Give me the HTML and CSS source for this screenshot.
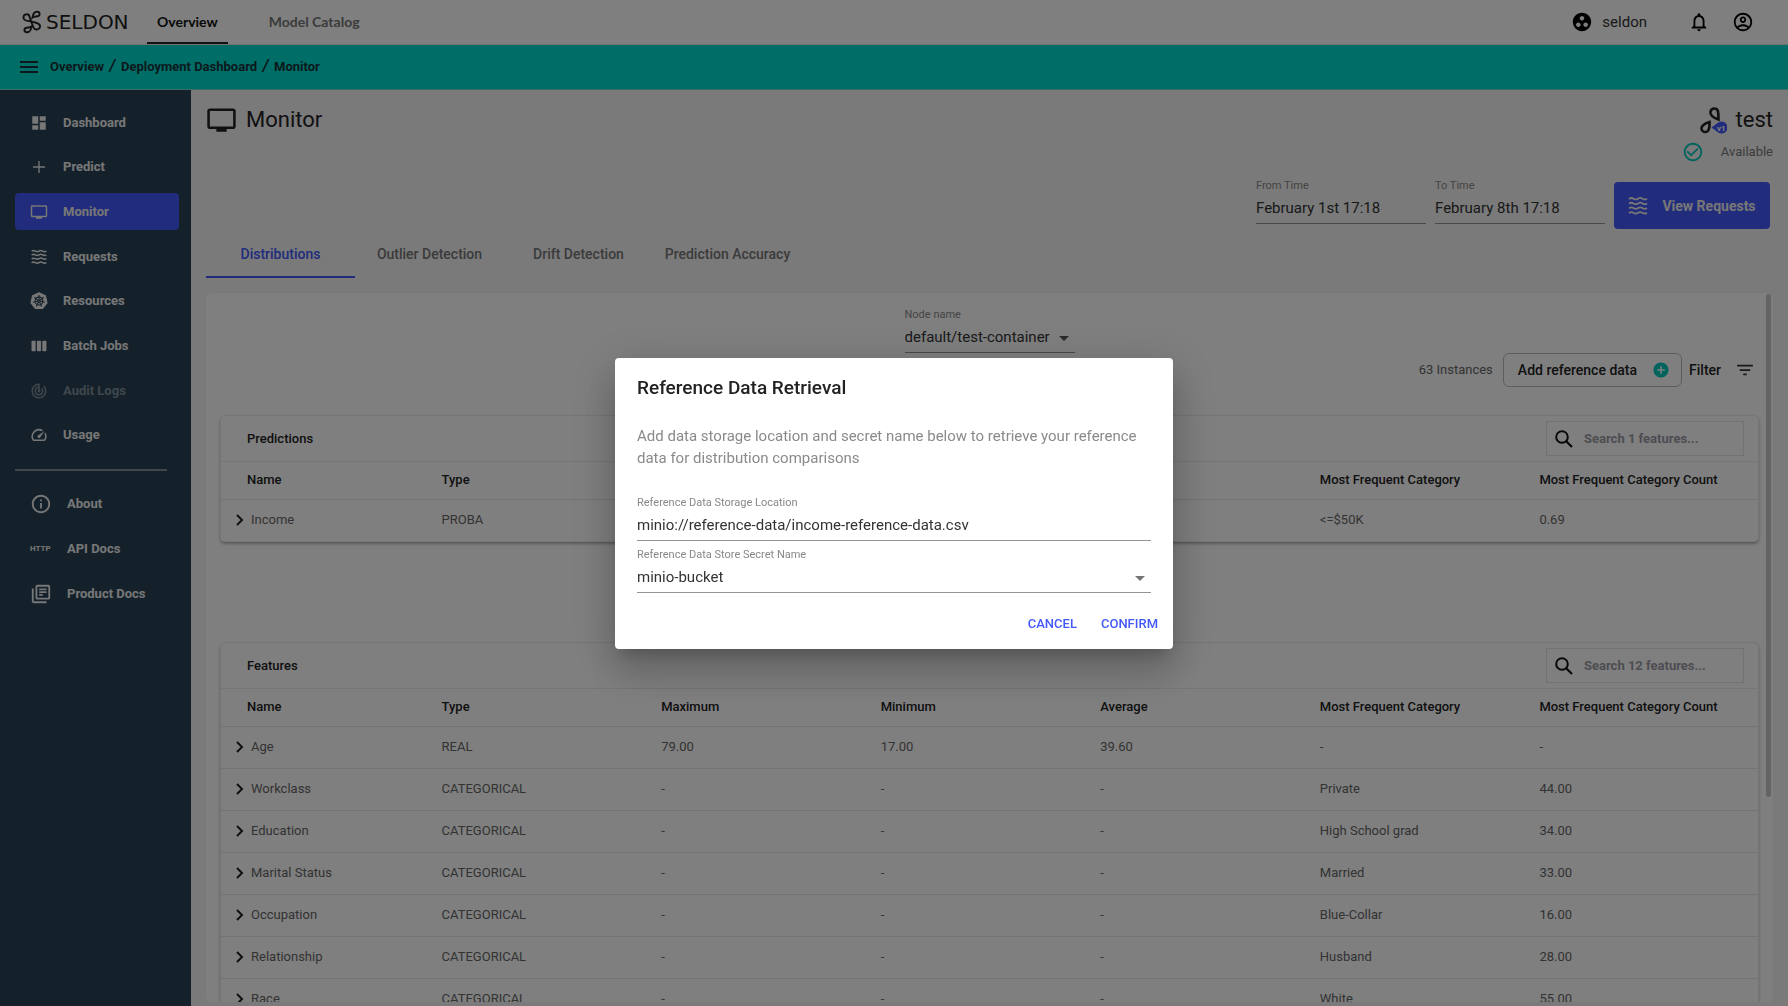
FILE: index.html
```html
<!DOCTYPE html>
<html lang="en">
<head>
<meta charset="utf-8">
<meta name="viewport" content="width=device-width, initial-scale=1">
<title>Seldon Deploy - Monitor</title>
<link rel="stylesheet" href="styles.css">
</head>
<body>
<svg class="sprite" aria-hidden="true">
  <symbol id="chevron" viewBox="0 0 8 12"><path d="M1 1l5 5-5 5" fill="none" stroke="currentColor" stroke-width="2"/></symbol>
  <symbol id="waves" viewBox="0 0 20 18"><path d="M1 2q2.200-1.800 4.500-.3t4.500 0t4.500 0t4.500 0M1 6.700q2.200-1.800 4.500-.3t4.500 0t4.500 0t4.500 0M1 11.400q2.200-1.800 4.500-.3t4.500 0t4.500 0t4.500 0M1 16.100q2.200-1.800 4.500-.3t4.500 0t4.500 0t4.500 0" fill="none" stroke="currentColor" stroke-width="1.800"/></symbol>
  <symbol id="tv" viewBox="0 0 24 24"><path d="M21 3H3c-1.110 0-2 .89-2 2v12c0 1.100.89 2 2 2h5v2h8v-2h5c1.100 0 1.990-.9 1.990-2L23 5c0-1.110-.9-2-2-2zm0 14H3V5h18v12z"/></symbol>
  <symbol id="search" viewBox="0 0 18 18"><circle cx="7" cy="7" r="5.800" fill="none" stroke="currentColor" stroke-width="2"/><path d="M11 11l6 6" stroke="currentColor" stroke-width="2.200"/></symbol>
  <symbol id="arrow" viewBox="0 0 10 5"><path d="M0 0h10L5 5z"/></symbol>
</svg>

<header class="topbar">
  <a class="brand" href="#">
    <svg class="brand-mark" viewBox="0 0 20 24" fill="none" stroke="currentColor" stroke-width="1.900"><path d="M10 11.500C8 10.600 2 12 1.500 8 1 4 6.500 3 7.500 6.500 8.500 10 10 14 11.500 17.500c1.500 3.500 7 2 6.500-1.500-.5-3.500-5-3-8-4.500M10.500 7.500C11 3.500 13 1.500 15.500 1.800c2.800.3 2.800 4 0 4.500-2 .4-3.500 0-5 1.200zM9.500 16.500C9 20.500 7 22.500 4.500 22.200c-2.800-.3-2.800-4 0-4.500 2-.4 3.500 0 5-1.200z"/></svg>
    <span>SELDON</span>
  </a>
  <nav class="topnav">
    <a class="current" href="#">Overview</a>
    <a href="#">Model Catalog</a>
  </nav>
  <div class="account">
    <svg class="i22" viewBox="0 0 24 24"><path d="M12 2C6.480 2 2 6.480 2 12s4.480 10 10 10 10-4.480 10-10S17.520 2 12 2zM8 17.500c-1.380 0-2.500-1.120-2.500-2.500s1.120-2.500 2.500-2.500 2.500 1.120 2.500 2.500-1.120 2.500-2.500 2.500zM9.500 8c0-1.380 1.120-2.500 2.500-2.500s2.500 1.120 2.500 2.500-1.120 2.500-2.500 2.500S9.500 9.380 9.500 8zm6.500 9.500c-1.380 0-2.500-1.120-2.500-2.500s1.120-2.500 2.500-2.500 2.500 1.120 2.500 2.500-1.120 2.500-2.500 2.500z"/></svg>
    <span class="account-name">seldon</span>
    <button class="icon-btn" aria-label="Notifications"><svg class="i22" viewBox="0 0 24 24"><path d="M12 22c1.100 0 2-.9 2-2h-4c0 1.100.9 2 2 2zm6-6v-5c0-3.070-1.630-5.640-4.500-6.320V4c0-.83-.67-1.500-1.500-1.500s-1.500.67-1.500 1.500v.68C7.640 5.360 6 7.920 6 11v5l-2 2v1h16v-1l-2-2zm-2 1H8v-6c0-2.480 1.510-4.500 4-4.500s4 2.020 4 4.500v6z"/></svg></button>
    <button class="icon-btn" aria-label="Account"><svg class="i22" viewBox="0 0 24 24"><path d="M12 2C6.480 2 2 6.480 2 12s4.480 10 10 10 10-4.480 10-10S17.520 2 12 2zM7.070 18.280c.43-.9 3.050-1.780 4.930-1.780s4.510.88 4.930 1.780C15.570 19.360 13.860 20 12 20s-3.570-.64-4.930-1.720zm11.290-1.450c-1.430-1.740-4.900-2.330-6.360-2.330s-4.930.59-6.360 2.330C4.620 15.490 4 13.820 4 12c0-4.410 3.590-8 8-8s8 3.590 8 8c0 1.820-.62 3.490-1.640 4.830zM12 6c-1.940 0-3.500 1.560-3.500 3.500S10.060 13 12 13s3.500-1.560 3.500-3.500S13.940 6 12 6zm0 5c-.83 0-1.500-.67-1.500-1.500S11.170 8 12 8s1.500.67 1.500 1.500S12.830 11 12 11z"/></svg></button>
  </div>
</header>

<div class="crumbbar">
  <button class="icon-btn" aria-label="Menu"><svg class="menu-icon" viewBox="0 0 18 12"><path d="M0 0h18v2H0zM0 5h18v2H0zM0 10h18v2H0z"/></svg></button>
  <nav class="crumbs">
    <a href="#">Overview</a><span class="slash">/</span><a href="#">Deployment Dashboard</a><span class="slash">/</span><a href="#">Monitor</a>
  </nav>
</div>

<div class="shell">
  <aside class="sidebar">
    <nav class="side-main">
      <a href="#"><svg viewBox="0 0 24 24"><path d="M3 13h8V3H3v10zm0 8h8v-6H3v6zm10 0h8V11h-8v10zm0-18v6h8V3h-8z"/></svg>Dashboard</a>
      <a href="#"><svg viewBox="0 0 24 24"><path d="M12 4v16M4 12h16" stroke="currentColor" stroke-width="1.800"/></svg>Predict</a>
      <a class="active" href="#"><svg viewBox="0 0 24 24"><use href="#tv"/></svg>Monitor</a>
      <a href="#"><svg viewBox="-1 -2 22 22"><use href="#waves" width="20" height="18"/></svg>Requests</a>
      <a href="#"><svg viewBox="0 0 24 24"><path d="M12 1l8.600 4.100 2.100 9.300-5.900 7.500H7.200l-5.900-7.500 2.100-9.300z" stroke="currentColor" stroke-width="1.500" stroke-linejoin="round"/><g class="wheel"><circle cx="12" cy="12" r="5.200"/><circle cx="12" cy="12" r="1.500"/><path d="M12 10.500V4M13.200 11.100l5-4.100M13.500 12.300l6.300 1.500M12.700 13.400l2.800 5.800M11.300 13.400l-2.800 5.800M10.500 12.300l-6.300 1.500M10.800 11.100L5.800 7"/></g></svg>Resources</a>
      <a href="#"><svg viewBox="0 0 24 24"><rect x="2" y="5" width="5.500" height="14" rx="1"/><rect x="9.200" y="5" width="5.500" height="14" rx="1"/><rect x="16.400" y="5" width="5.500" height="14" rx="1"/></svg>Batch Jobs</a>
      <a class="disabled" href="#"><svg viewBox="0 0 24 24"><path d="M19.070 4.930l-1.410 1.410C19.100 7.790 20 9.790 20 12c0 4.420-3.580 8-8 8s-8-3.580-8-8c0-4.080 3.050-7.440 7-7.930v2.020C8.160 6.570 6 9.030 6 12c0 3.310 2.690 6 6 6s6-2.690 6-6c0-1.660-.67-3.160-1.760-4.240l-1.410 1.410C15.550 9.900 16 10.900 16 12c0 2.210-1.790 4-4 4s-4-1.790-4-4c0-1.860 1.280-3.410 3-3.860v2.140c-.6.35-1 .98-1 1.720 0 1.100.9 2 2 2s2-.9 2-2c0-.74-.4-1.380-1-1.720V2h-1C6.480 2 2 6.480 2 12s4.480 10 10 10 10-4.480 10-10c0-2.760-1.120-5.260-2.930-7.070z"/></svg>Audit Logs</a>
      <a href="#"><svg viewBox="0 0 24 24"><path d="M20.380 8.570l-1.230 1.850a8 8 0 0 1-.22 7.580H5.070A8 8 0 0 1 15.580 6.850l1.850-1.230A10 10 0 0 0 3.350 19a2 2 0 0 0 1.720 1h13.850a2 2 0 0 0 1.740-1 10 10 0 0 0-.27-10.440zm-9.790 6.840a2 2 0 0 0 2.830 0l5.660-8.490-8.490 5.660a2 2 0 0 0 0 2.830z"/></svg>Usage</a>
    </nav>
    <hr>
    <nav class="side-more">
      <a href="#"><svg viewBox="0 0 24 24"><path d="M11 7h2v2h-2zm0 4h2v6h-2zm1-9C6.480 2 2 6.480 2 12s4.480 10 10 10 10-4.480 10-10S17.520 2 12 2zm0 18c-4.410 0-8-3.590-8-8s3.590-8 8-8 8 3.590 8 8-3.590 8-8 8z"/></svg>About</a>
      <a href="#"><span class="http">HTTP</span>API Docs</a>
      <a href="#"><svg viewBox="0 0 24 24"><path d="M4 6H2v14c0 1.100.9 2 2 2h14v-2H4V6zm16-4H8c-1.100 0-2 .9-2 2v12c0 1.100.9 2 2 2h12c1.100 0 2-.9 2-2V4c0-1.100-.9-2-2-2zm0 14H8V4h12v12zM10 9h8v2h-8zm0 3h4v2h-4zm0-6h8v2h-8z"/></svg>Product Docs</a>
    </nav>
  </aside>

  <main class="content">
    <div class="page-head">
      <h1><svg viewBox="0 2 24 20"><use href="#tv" width="24" height="24"/></svg>Monitor</h1>
      <div class="deployment">
        <div class="deployment-name">
          <svg viewBox="0 0 27 27"><g fill="none" stroke="currentColor" stroke-width="2.600"><path d="M18.500 12.500C13 10.500 10 8 10.400 5c.8-4.500 6.800-4.500 7.600-.5.400 2 .5 4.500.5 8z"/><path d="M9.500 15c-5 1.500-7.500 3.500-8 6-.3 3.500 3.500 5 6 3.200 2.500-1.900 2-5.500 2-9.200z"/></g><path class="badge-shape" d="M11.500 20.500l7-5.200a6 6 0 1 1 0 10.400z"/><text class="badge-text" x="17" y="24">v1</text></svg>
          <span>test</span>
        </div>
        <div class="status">
          <svg viewBox="0 0 24 24"><path d="M16.590 7.580L10 14.170l-3.590-3.580L5 12l5 5 8-8zM12 2C6.480 2 2 6.480 2 12s4.480 10 10 10 10-4.480 10-10S17.520 2 12 2zm0 18c-4.420 0-8-3.580-8-8s3.580-8 8-8 8 3.580 8 8-3.580 8-8 8z"/></svg>
          <span>Available</span>
        </div>
      </div>
    </div>

    <div class="time-row">
      <div class="field"><label for="from">From Time</label><input id="from" value="February 1st 17:18"></div>
      <div class="field"><label for="to">To Time</label><input id="to" value="February 8th 17:18"></div>
      <button class="view-btn"><svg viewBox="0 0 20 18"><use href="#waves"/></svg>View Requests</button>
    </div>

    <div class="tabs" role="tablist">
      <button role="tab" aria-selected="true">Distributions</button>
      <button role="tab" aria-selected="false">Outlier Detection</button>
      <button role="tab" aria-selected="false">Drift Detection</button>
      <button role="tab" aria-selected="false">Prediction Accuracy</button>
    </div>

    <div class="panel">
      <div class="scroll-thumb"></div>
      <div class="field node-field"><label for="node">Node name</label>
        <div class="select-box"><select id="node"><option>default/test-container</option></select><svg><use href="#arrow"/></svg></div>
      </div>
      <div class="tools">
        <span class="instances">63 Instances</span>
        <button class="add-btn">Add reference data<svg viewBox="0 0 24 24"><path d="M12 2C6.480 2 2 6.480 2 12s4.480 10 10 10 10-4.480 10-10S17.520 2 12 2zm5 11h-4v4h-2v-4H7v-2h4V7h2v4h4v2z"/></svg></button>
        <button class="filter-btn">Filter<svg viewBox="3 4 18 16"><path d="M10 18h4v-2h-4v2zM3 6v2h18V6H3zm3 7h12v-2H6v2z"/></svg></button>
      </div>

      <section class="card">
        <div class="card-head"><h2>Predictions</h2>
          <label class="search"><svg><use href="#search"/></svg><input type="text" aria-label="Search predictions" placeholder="Search 1 features..."></label></div>
        <table>
          <thead><tr><th>Name</th><th>Type</th><th></th><th></th><th></th><th>Most Frequent Category</th><th>Most Frequent Category Count</th></tr></thead>
          <tbody><tr><td><svg><use href="#chevron"/></svg>Income</td><td>PROBA</td><td></td><td></td><td></td><td>&lt;=$50K</td><td>0.69</td></tr></tbody>
        </table>
      </section>

      <section class="card">
        <div class="card-head"><h2>Features</h2>
          <label class="search"><svg><use href="#search"/></svg><input type="text" aria-label="Search features" placeholder="Search 12 features..."></label></div>
        <table>
          <thead><tr><th>Name</th><th>Type</th><th>Maximum</th><th>Minimum</th><th>Average</th><th>Most Frequent Category</th><th>Most Frequent Category Count</th></tr></thead>
          <tbody>
            <tr><td><svg><use href="#chevron"/></svg>Age</td><td>REAL</td><td>79.00</td><td>17.00</td><td>39.60</td><td>-</td><td>-</td></tr>
            <tr><td><svg><use href="#chevron"/></svg>Workclass</td><td>CATEGORICAL</td><td>-</td><td>-</td><td>-</td><td>Private</td><td>44.00</td></tr>
            <tr><td><svg><use href="#chevron"/></svg>Education</td><td>CATEGORICAL</td><td>-</td><td>-</td><td>-</td><td>High School grad</td><td>34.00</td></tr>
            <tr><td><svg><use href="#chevron"/></svg>Marital Status</td><td>CATEGORICAL</td><td>-</td><td>-</td><td>-</td><td>Married</td><td>33.00</td></tr>
            <tr><td><svg><use href="#chevron"/></svg>Occupation</td><td>CATEGORICAL</td><td>-</td><td>-</td><td>-</td><td>Blue-Collar</td><td>16.00</td></tr>
            <tr><td><svg><use href="#chevron"/></svg>Relationship</td><td>CATEGORICAL</td><td>-</td><td>-</td><td>-</td><td>Husband</td><td>28.00</td></tr>
            <tr><td><svg><use href="#chevron"/></svg>Race</td><td>CATEGORICAL</td><td>-</td><td>-</td><td>-</td><td>White</td><td>55.00</td></tr>
          </tbody>
        </table>
      </section>
    </div>
  </main>
</div>

<div class="backdrop">
  <form class="dialog" role="dialog" aria-modal="true" aria-labelledby="dialog-title">
    <h2 id="dialog-title">Reference Data Retrieval</h2>
    <p>Add data storage location and secret name below to retrieve your reference data for distribution comparisons</p>
    <div class="field"><label for="location">Reference Data Storage Location</label><input id="location" value="minio://reference-data/income-reference-data.csv"></div>
    <div class="field"><label for="secret">Reference Data Store Secret Name</label>
      <div class="select-box"><select id="secret"><option>minio-bucket</option></select><svg><use href="#arrow"/></svg></div>
    </div>
    <div class="dialog-actions"><button type="button">CANCEL</button><button type="button">CONFIRM</button></div>
  </form>
</div>
</body>
</html>
```
FILE: styles.css
```css
* { box-sizing: border-box; }

body {
  margin: 0;
  height: 100vh;
  display: flex;
  flex-direction: column;
  overflow: hidden;
  background: #f4f4f4;
  color: #222;
  font: 14px/20px Roboto, sans-serif;
}

a { color: inherit; text-decoration: none; }
svg { fill: currentColor; flex: none; }
h1, h2, p { margin: 0; }
button, input, select { font: inherit; color: inherit; border: 0; padding: 0; margin: 0; background: none; outline: 0; }
button { cursor: pointer; }
.sprite { position: absolute; width: 0; height: 0; }
.icon-btn { display: flex; }
.i22 { width: 22px; height: 22px; }

/* Top bar */
.topbar {
  flex: none;
  height: 45px;
  display: flex;
  align-items: center;
  background: #fff;
  color: #000;
  border-bottom: 1px solid #e0e4e4;
}
.brand {
  display: flex;
  align-items: center;
  gap: 4px;
  width: 147px;
  padding-left: 22px;
  color: #222;
  font: 20px/20px "DejaVu Sans", sans-serif;
}
.brand-mark { width: 20px; height: 24px; fill: none; }
.topnav { display: flex; height: 100%; gap: 31px; font: 14px/44px Lato, sans-serif; }
.topnav a { padding: 0 10px; font-weight: 700; color: #777; }
.topnav .current { color: #111; border-bottom: 2px solid #222; }
.account { margin-left: auto; display: flex; align-items: center; padding-right: 34px; }
.account-name { margin: 0 41px 0 9px; color: #333; font-size: 15px; }
.account .icon-btn + .icon-btn { margin-left: 22px; }

/* Breadcrumbs */
.crumbbar {
  flex: none;
  height: 45px;
  display: flex;
  align-items: center;
  gap: 12px;
  padding-left: 20px;
  background: #00dccc;
  color: #16333b;
  border-bottom: 1px solid #6fd9d0;
}
.menu-icon { width: 18px; height: 12px; }
.crumbs { display: flex; font-size: 13px; font-weight: 700; }
.slash { width: 17px; text-align: center; font-size: 16px; line-height: 18px; font-style: italic; }

/* Sidebar */
.shell { flex: 1; min-height: 0; display: flex; }
.sidebar { flex: none; width: 191px; padding: 14px 12px 0 15px; background: #284256; color: #eee; font-size: 13px; font-weight: 700; }
.sidebar a { display: flex; align-items: center; height: 37px; border-radius: 4px; }
.side-main { display: flex; flex-direction: column; justify-content: space-between; height: 350px; }
.side-main a { gap: 15px; padding-left: 15px; }
.side-main svg { width: 18px; height: 18px; }
.side-main .active { background: #4258f8; }
.side-main .disabled { color: #7f8e99; }
.wheel { fill: none; stroke: #284256; stroke-width: 1.4; }
.sidebar hr { width: 152px; height: 2px; margin: 15px 0 14px; border: 0; background: #7f8e99; }
.side-more { display: flex; flex-direction: column; gap: 8px; }
.side-more a { gap: 15px; padding-left: 15px; }
.side-more svg { width: 22px; height: 22px; }
.http { width: 22px; font-size: 8px; }

/* Main area */
.content { flex: 1; min-width: 0; display: flex; flex-direction: column; padding: 12px 15px 4px; }
.page-head { display: flex; justify-content: space-between; align-items: flex-start; }
h1 { display: flex; align-items: center; gap: 9px; height: 36px; font-size: 22px; font-weight: 400; }
h1 svg { width: 31px; height: 26px; }
.deployment { display: flex; flex-direction: column; align-items: flex-end; }
.deployment-name { display: flex; align-items: center; gap: 9px; height: 36px; font-size: 22px; }
.deployment-name svg { width: 27px; height: 27px; }
.badge-shape { fill: #4258f8; }
.badge-text { fill: #fff; font-size: 8px; font-weight: 700; }
.status { display: flex; align-items: center; gap: 17px; height: 28px; color: #777; font-size: 13px; }
.status svg { width: 22px; height: 22px; color: #00c8bc; }

.field label { display: block; height: 16px; font-size: 11px; line-height: 18px; color: #888; }
.field input, .field select { display: block; width: 100%; height: 31px; border-bottom: 1px solid #949494; font-size: 15px; color: #333; }
.select-box { position: relative; }
.select-box select { appearance: none; border-radius: 0; }
.select-box svg { position: absolute; right: 6px; top: 14px; width: 10px; height: 5px; color: #757575; pointer-events: none; }

.time-row { display: flex; align-items: flex-start; gap: 9px; justify-content: flex-end; padding: 11px 3px 0 0; }
.time-row .field { width: 170px; }
.view-btn { display: flex; align-items: center; justify-content: center; gap: 14px; width: 156px; height: 47px; margin-top: 5px; border-radius: 4px; background: #4258f8; color: #eee; font-weight: 700; }
.view-btn svg { width: 20px; height: 18px; }

.tabs { display: flex; height: 49px; }
.tabs button { width: 149px; padding-top: 3px; color: #777; font-size: 14px; font-weight: 500; border-bottom: 2px solid transparent; white-space: nowrap; }
.tabs button[aria-selected="true"] { color: #4258f8; border-color: #4258f8; }

/* Scrolling panel */
.panel { position: relative; flex: 1; min-height: 0; overflow: hidden; margin-top: 15px; padding: 13px 14px 0; border-radius: 6px; background: #fff; }
.scroll-thumb { position: absolute; right: 2px; top: 1px; width: 5px; height: 503px; border-radius: 3px; background: #c8c8c8; }
.node-field { width: 170px; margin: 0 auto; }
.panel .select-box svg { color: #555; }
.tools { display: flex; align-items: center; justify-content: flex-end; height: 34px; margin-right: 6px; }
.instances { color: #666; margin-right: 10px; font-size: 13px; }
.add-btn { display: flex; align-items: center; gap: 15px; height: 34px; padding: 0 11px 0 14px; border: 1px solid #bbb; border-radius: 6px; color: #222; font-weight: 500; }
.add-btn svg { width: 18px; height: 18px; color: #00c8bc; }
.filter-btn { display: flex; align-items: center; gap: 16px; margin-left: 7px; font-weight: 500; }
.filter-btn svg { width: 16px; height: 14px; color: #333; }

.card { margin-top: 28px; border: 1px solid #ececec; border-radius: 5px; box-shadow: 0 2px 3px rgba(0, 0, 0, .3); }
.card + .card { margin-top: 100px; }
.card-head { display: flex; align-items: center; justify-content: space-between; height: 46px; padding: 0 14px 0 26px; border-bottom: 1px solid #ececec; }
.card h2 { font-size: 13px; font-weight: 500; }
.search { display: flex; align-items: center; gap: 11px; width: 198px; height: 35px; padding-left: 8px; border: 1px solid #e4e4e4; }
.search svg { width: 18px; height: 18px; color: #111; }
.search input { width: 150px; font-size: 13px; font-weight: 700; }
.search input::placeholder { color: #9a9aa5; opacity: 1; }
table { width: 100%; table-layout: fixed; border-collapse: collapse; }
th, td { padding: 0 0 0 1px; text-align: left; white-space: nowrap; }
th { height: 37px; font-size: 13px; font-weight: 500; }
th:first-child { padding-left: 26px; }
td { height: 42px; font-size: 13px; color: #666; }
td:first-child { padding-left: 15px; }
td svg { width: 8px; height: 12px; margin-right: 7px; vertical-align: -2px; color: #222; }
tbody tr { border-top: 1px solid #e6e6e6; }

/* Dialog */
.backdrop { position: fixed; inset: 0; display: flex; align-items: center; justify-content: center; background: rgba(0, 0, 0, .5); }
.dialog {
  width: 558px;
  padding: 18px 22px 9px;
  border-radius: 4px;
  background: #fff;
  box-shadow: 0 11px 15px -7px rgba(0, 0, 0, .2), 0 24px 38px 3px rgba(0, 0, 0, .14), 0 9px 46px 8px rgba(0, 0, 0, .12);
}
.dialog h2 { font-size: 19px; line-height: 24px; font-weight: 500; }
.dialog p { margin: 25px 0; font-size: 15px; line-height: 22px; color: #8a8a8a; }
.dialog .field + .field { margin-top: 5px; }
.dialog-actions { display: flex; justify-content: flex-end; gap: 24px; margin: 15px -7px 0 0; }
.dialog-actions button { height: 32px; color: #4258f8; font-size: 13px; font-weight: 500; }
```
